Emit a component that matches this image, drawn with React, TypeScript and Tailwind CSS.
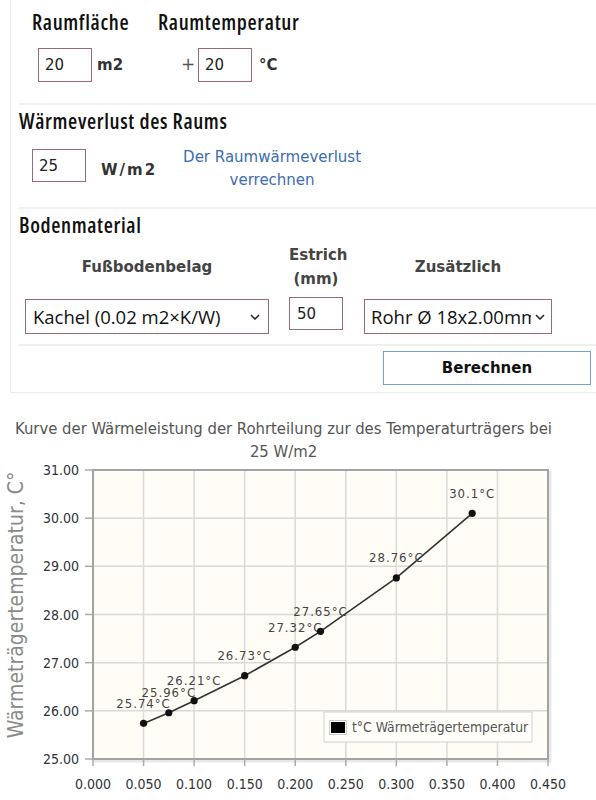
import React from "react";

const heading =
  "font-['Open_Sans',sans-serif] font-stretch-condensed font-semibold text-[21px] leading-[24px] tracking-[0.65px] text-[#111]";
const form = "font-['DejaVu_Sans',Verdana,sans-serif]";
const inputCls =
  "border border-[#9b6a78] bg-white text-[15px] text-[#222] outline-none font-['DejaVu_Sans',Verdana,sans-serif]";
const chartFont = "'DejaVu Sans Condensed','Liberation Sans Narrow',sans-serif";

function Sep() {
  return <div className="ml-[8px] h-[2px] bg-[#efefef]" />;
}

function Chevron({ className }: { className: string }) {
  return (
    <svg
      className={"pointer-events-none absolute " + className}
      width="10"
      height="6"
      viewBox="0 0 10 6"
      fill="none"
    >
      <path d="M1 1 L5 5 L9 1" stroke="#222" strokeWidth="1.5" />
    </svg>
  );
}

const X0 = 93;
const X1 = 548;
const Y0 = 7;
const Y1 = 296;
const xs = (v: number) => X0 + (v / 0.45) * (X1 - X0);
const ys = (v: number) => Y1 - ((v - 25) / 6) * (Y1 - Y0);

const data: [number, number, string][] = [
  [0.05, 25.74, "25.74°C"],
  [0.075, 25.96, "25.96°C"],
  [0.1, 26.21, "26.21°C"],
  [0.15, 26.73, "26.73°C"],
  [0.2, 27.32, "27.32°C"],
  [0.225, 27.65, "27.65°C"],
  [0.3, 28.76, "28.76°C"],
  [0.375, 30.1, "30.1°C"],
];

function Chart() {
  const xTicks = [0, 0.05, 0.1, 0.15, 0.2, 0.25, 0.3, 0.35, 0.4, 0.45];
  const yTicks = [25, 26, 27, 28, 29, 30, 31];
  const path = data.map(([x, y], i) => `${i ? "L" : "M"}${xs(x).toFixed(1)} ${ys(y).toFixed(1)}`).join(" ");
  return (
    <svg width="596" height="336" className="block" style={{ fontFamily: chartFont }}>
      <rect x={X0 + 2} y={Y0 + 2} width={X1 - X0} height={Y1 - Y0} fill="none" stroke="rgba(0,0,0,0.09)" strokeWidth="3" />
      <rect x={X0} y={Y0} width={X1 - X0} height={Y1 - Y0} fill="#fffdf6" />
      {xTicks.slice(1, -1).map((t) => (
        <line key={"gx" + t} x1={xs(t)} x2={xs(t)} y1={Y0} y2={Y1} stroke="#dadada" strokeWidth="1.5" />
      ))}
      {yTicks.slice(1, -1).map((t) => (
        <line key={"gy" + t} x1={X0} x2={X1} y1={ys(t)} y2={ys(t)} stroke="#dadada" strokeWidth="1.5" />
      ))}
      <rect x={X0} y={Y0} width={X1 - X0} height={Y1 - Y0} fill="none" stroke="#a3a3a3" strokeWidth="2" />
      {yTicks.map((t) => (
        <g key={"ty" + t}>
          <line x1={X0 - 8} x2={X0} y1={ys(t)} y2={ys(t)} stroke="#aaa" strokeWidth="1.5" />
          <text x={79} y={ys(t)} textAnchor="end" dominantBaseline="central" fontSize="14" fill="#333">
            {t.toFixed(2)}
          </text>
        </g>
      ))}
      {xTicks.map((t) => (
        <g key={"tx" + t}>
          <line x1={xs(t)} x2={xs(t)} y1={Y1} y2={Y1 + 7} stroke="#aaa" strokeWidth="1.5" />
          <text x={xs(t)} y={321} textAnchor="middle" dominantBaseline="central" fontSize="14" fill="#333">
            {t.toFixed(3)}
          </text>
        </g>
      ))}
      <path d={path} fill="none" stroke="#333" strokeWidth="1.6" />
      {data.map(([x, y, l]) => (
        <g key={l}>
          <circle cx={xs(x)} cy={ys(y)} r="3.6" fill="#111" />
          <text
            x={xs(x)}
            y={ys(y) - 20}
            textAnchor="middle"
            dominantBaseline="central"
            fontSize="13"
            letterSpacing="1"
            fill="#444"
          >
            {l}
          </text>
        </g>
      ))}
      <rect x="324" y="249" width="208" height="30" fill="#fffef9" stroke="#d0d0d0" />
      <rect x="329.5" y="257.5" width="17" height="14" fill="#fff" stroke="#ccc" />
      <rect x="331" y="259" width="14" height="11" fill="#000" />
      <text x="352" y="264" dominantBaseline="central" fontSize="13.8" fill="#555">
        t°C Wärmeträgertemperatur
      </text>
      <text
        transform="translate(16 142) rotate(-90)"
        textAnchor="middle"
        dominantBaseline="central"
        fontSize="21"
        fill="#8a8a8a"
      >
        Wärmeträgertemperatur, C°
      </text>
    </svg>
  );
}

export default function App() {
  return (
    <div className="w-[596px] bg-white">
      <div className="ml-[10px] border-b border-l border-[#ececec] pb-[7px]">
        {/* Section 1 */}
        <div className="flex h-[103px] pt-[10px]">
          <div className="ml-[21px] w-[126px]">
            <div className={heading}>Raumfläche</div>
            <div className="mt-[14px] flex items-center">
              <input className={inputCls + " ml-[6px] h-[34px] w-[54px] pl-[6px]"} defaultValue="20" />
              <span className={form + " ml-[5px] text-[15px] font-bold text-[#333]"}>m2</span>
            </div>
          </div>
          <div>
            <div className={heading}>Raumtemperatur</div>
            <div className="mt-[14px] flex items-center">
              <span className={form + " ml-[23px] w-[17px] text-[17px] text-[#555]"}>+</span>
              <input className={inputCls + " h-[34px] w-[54px] pl-[6px]"} defaultValue="20" />
              <span className={form + " ml-[7px] text-[15px] font-bold text-[#333]"}>°C</span>
            </div>
          </div>
        </div>
        <Sep />
        {/* Section 2 */}
        <div className="h-[102px] pt-[4px]">
          <div className={heading + " ml-[8px]"}>Wärmeverlust des Raums</div>
          <div className="ml-[21px] mt-[13px] flex items-start">
            <input className={inputCls + " mt-[3px] h-[33px] w-[54px] pl-[6px]"} defaultValue="25" />
            <span className={form + " ml-[15px] mt-[14px] text-[15px] font-bold leading-[20px] tracking-[2px] text-[#333]"}>
              W/m2
            </span>
            <div className={form + " ml-[26px] text-center text-[15px] leading-[23px] text-[#3b6db4]"}>
              Der Raumwärmeverlust
              <br />
              verrechnen
            </div>
          </div>
        </div>
        <Sep />
        {/* Section 3 */}
        <div className="pb-[10px] pt-[4px]">
          <div className={heading + " ml-[8px]"}>Bodenmaterial</div>
          <div className={form + " ml-[14px] mt-[6px] flex h-[48px] items-center text-[15px] font-bold text-[#444]"}>
            <div className="w-[244px] text-center">Fußbodenbelag</div>
            <div className="ml-[20px] w-[54px] text-center leading-[24px]">
              Estrich
              <br />
              (mm)
            </div>
            <div className="ml-[21px] w-[188px] text-center">Zusätzlich</div>
          </div>
          <div className="ml-[14px] mt-[6px] flex items-start">
            <div className="relative mt-[2px] h-[35px] w-[244px]">
              <select className="h-full w-full appearance-none border border-[#9b6a78] bg-white pl-[7px] pr-[24px] font-['Open_Sans',sans-serif] text-[18.5px] text-[#111] outline-none">
                <option>Kachel (0.02 m2×K/W)</option>
              </select>
              <Chevron className="right-[9px] top-[15px]" />
            </div>
            <input className={inputCls + " ml-[20px] h-[33px] w-[54px] pl-[7px]"} defaultValue="50" />
            <div className="relative ml-[21px] mt-[2px] h-[35px] w-[188px]">
              <select className="h-full w-full appearance-none border border-[#9b6a78] bg-white pl-[6px] pr-[20px] font-['Open_Sans',sans-serif] text-[18.5px] text-[#111] outline-none">
                <option>Rohr Ø 18x2.00mm</option>
              </select>
              <Chevron className="right-[7px] top-[15px]" />
            </div>
          </div>
        </div>
        <Sep />
        <div className="flex justify-end pr-[5px] pt-[5px]">
          <button className={form + " h-[34px] w-[208px] border border-[#7f9fd0] bg-white text-[15px] font-bold text-[#111]"}>
            Berechnen
          </button>
        </div>
      </div>
      {/* Chart */}
      <div
        className="mt-[24px] w-[567px] text-center text-[16.5px] leading-[23px] text-[#555]"
        style={{ fontFamily: chartFont }}
      >
        Kurve der Wärmeleistung der Rohrteilung zur des Temperaturträgers bei
        <br />
        25 W/m2
      </div>
      <Chart />
    </div>
  );
}
